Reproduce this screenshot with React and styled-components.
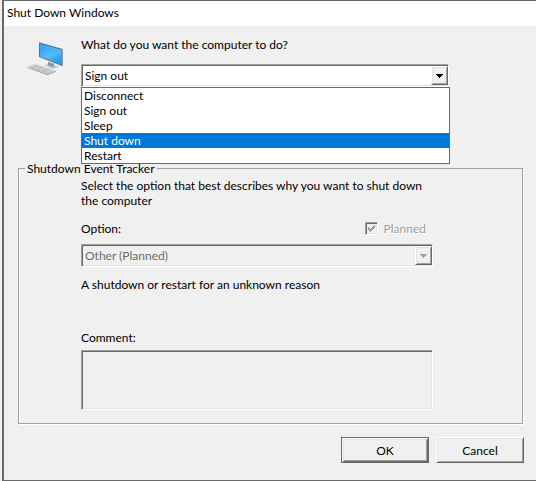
import React from 'react';
import {useState} from 'react';
import styled, {createGlobalStyle, css} from "styled-components"

const GlobalStyle = createGlobalStyle`
	* {
		box-sizing: border-box;
	}

	body {
		margin: 0;
		background-color: #f0f0f0;
		color: #000;
		font-family: Lato, "Open Sans", sans-serif;
		font-size: 12px;
		line-height: 15px;
	}

	button, select, textarea {
		font: inherit;
		color: inherit;
	}
`

const sunken = css`
	border: 1px solid;
	border-color: #a0a0a0 #fff #fff #a0a0a0;
	box-shadow: inset 1px 1px #696969, inset -1px -1px #e3e3e3;
`

const raised = css`
	border: 1px solid;
	border-color: #fff #696969 #696969 #fff;
	box-shadow: inset 1px 1px #e3e3e3, inset -1px -1px #a0a0a0;
`

const Window = styled.div`
	display: flex;
	flex-direction: column;
	min-height: 100vh;
	margin-left: 2px;
	border: solid #696969;
	border-width: 1px 0 1px 2px;
`

const TitleBar = styled.h1`
	margin: 0;
	height: 25px;
	padding: 4px 3px;
	background-color: #fff;
	font-size: 12px;
	font-weight: 400;
`

const Body = styled.form`
	display: flex;
	flex-direction: column;
	padding: 11px 12px 17px 14px;
`

const Question = styled.div`
	display: grid;
	grid-template-columns: 54px 1fr;
	align-items: start;
	padding: 0 75px 0 9px;
`

const Icon = styled.svg`
	width: 36px;
	height: 34px;
	margin-top: 5px;
`

const Label = styled.label`
	display: block;
`

const Combo = styled.div`
	position: relative;
	display: grid;
	margin-top: ${({$gap}) => $gap}px;
`

const Select = styled.select`
	${sunken}
	grid-area: 1 / 1;
	appearance: none;
	width: 100%;
	height: 23px;
	padding: 0 3px;
	border-radius: 0;
	outline: none;
	background-color: #fff;

	&:disabled {
		background-color: #f0f0f0;
		color: #6d6d6d;
		opacity: 1;
	}
`

const Arrow = styled.span`
	${raised}
	grid-area: 1 / 1;
	justify-self: end;
	display: flex;
	align-items: center;
	justify-content: center;
	width: 17px;
	height: 19px;
	margin: 2px 1px 2px 2px;
	background-color: #f0f0f0;
	color: ${({$disabled}) => $disabled ? "#a0a0a0" : "#000"};
	pointer-events: none;
`

const List = styled.ul`
	position: absolute;
	top: 100%;
	left: 0;
	right: -1px;
	z-index: 1;
	margin: 0;
	padding: 0;
	border: 1px solid #696969;
	background-color: #fff;
	list-style: none;
`

const Item = styled.li`
	padding: 0 2px;
	background-color: ${({$active}) => $active ? "#0078d7" : "transparent"};
	color: ${({$active}) => $active ? "#fff" : "#000"};
`

const Group = styled.fieldset`
	min-width: 0;
	margin: 74px 1px 0 0;
	padding: 2px 89px 13px 62px;
	border: 1px solid #a0a0a0;
	box-shadow: 1px 1px #fff, inset 1px 0 #fff;
`

const Legend = styled.legend`
	margin-left: -56px;
	padding: 0 2px;
`

const Text = styled.p`
	margin: 0;
`

const OptionRow = styled.div`
	display: flex;
	justify-content: space-between;
	margin-top: 13px;
	padding-right: 7px;
`

const Planned = styled.label`
	display: flex;
	align-items: center;
	gap: 6px;
	color: #a0a0a0;
	text-shadow: 1px 1px #fff;
`

const Tick = styled.span`
	display: grid;
	place-items: center;
`

const Checkbox = styled.input`
	${sunken}
	grid-area: 1 / 1;
	appearance: none;
	width: 13px;
	height: 13px;
	margin: 0;

	& + svg {
		grid-area: 1 / 1;
		visibility: hidden;
	}

	&:checked + svg {
		visibility: visible;
	}
`

const Reason = styled.p`
	min-height: 53px;
	margin: 10px 0 0;
`

const Comment = styled.textarea`
	${sunken}
	display: block;
	width: 100%;
	height: 60px;
	margin-top: 5px;
	padding: 2px 4px;
	border-radius: 0;
	background-color: #f0f0f0;
	resize: none;
`

const Actions = styled.div`
	display: flex;
	justify-content: flex-end;
	gap: 7px;
	margin-top: 13px;
`

const Button = styled.button`
	${raised}
	width: 88px;
	height: 26px;
	padding: 0;
	background-color: #f0f0f0;

	${({$primary}) => $primary && css`
		border-color: #696969;
		box-shadow: inset 1px 1px #fff, inset -1px -1px #696969, inset 2px 2px #e3e3e3, inset -2px -2px #a0a0a0;
	`}
`

const ACTIONS = ["Disconnect", "Sign out", "Sleep", "Shut down", "Restart"]

const Computer = () => (
	<Icon viewBox="21 21 108 102" aria-hidden="true">
		<defs>
			<linearGradient id="screen" x1="0" y1="0" x2="1" y2="1">
				<stop offset="0" stopColor="#2fa4f5" />
				<stop offset="0.5" stopColor="#4db5fa" />
				<stop offset="1" stopColor="#1c97f0" />
			</linearGradient>
		</defs>
		<path d="M72 90 92 86 118 96 98 102Z" fill="#c3c8cc" />
		<path d="M84 80 102 86 102 96 84 92Z" fill="#8d969d" />
		<path d="M22 96 45 86 108 107 83 119Z" fill="#d3d7da" />
		<path d="M22 96 83 117 108 107 108 110 83 121 22 99Z" fill="#9fa6ab" />
		<path d="M32 95 92 115M40 91 100 111M36 101 55 91M50 106 70 96M65 111 86 101" stroke="#aab1b6" strokeWidth="2" fill="none" />
		<path d="M57 22 128 42 128 94 57 66Z" fill="#5c7484" />
		<path d="M124 41 129 42 129 94 124 92Z" fill="#8e9ba4" />
		<path d="M60 26 124 44 124 89 60 64Z" fill="url(#screen)" />
		<path d="M60 64 124 44 124 60 80 72Z" fill="#6cc4ff" opacity="0.35" />
	</Icon>
)

const Triangle = () => (
	<svg width="7" height="4" viewBox="0 0 7 4" shapeRendering="crispEdges" aria-hidden="true">
		<path d="M0 0h7v1h-1v1h-1v1h-1v1h-1v-1h-1v-1h-1v-1h-1z" fill="currentColor" />
	</svg>
)

const App = () => {
	const [action, setAction] = useState("Sign out")
	const [active, setActive] = useState("Shut down")
	const [open, setOpen] = useState(true)

	const handleToggle = (e) => {
		e.preventDefault();
		setOpen(!open)
	}

	const handlePick = (name) => {
		setAction(name)
		setOpen(false)
	}

	return (
		<>
			<GlobalStyle />
			<Window>
				<TitleBar>Shut Down Windows</TitleBar>
				<Body onSubmit={(e) => e.preventDefault()}>
					<Question>
						<Computer />
						<div>
							<Label htmlFor="action">What do you want the computer to do?</Label>
							<Combo $gap={12}>
								<Select
									id="action"
									value={action}
									onMouseDown={handleToggle}
									onChange={e => setAction(e.target.value)}
								>
									{ACTIONS.map((name) => <option key={name}>{name}</option>)}
								</Select>
								<Arrow><Triangle /></Arrow>
								{open && (
									<List role="listbox" aria-label="Actions">
										{ACTIONS.map((name) => (
											<Item
												key={name}
												role="option"
												aria-selected={name === active}
												$active={name === active}
												onMouseEnter={() => setActive(name)}
												onClick={() => handlePick(name)}
											>
												{name}
											</Item>
										))}
									</List>
								)}
							</Combo>
						</div>
					</Question>
					<Group>
						<Legend>Shutdown Event Tracker</Legend>
						<Text>Select the option that best describes why you want to shut down the computer</Text>
						<OptionRow>
							<Label htmlFor="option">Option:</Label>
							<Planned>
								<Tick>
									<Checkbox type="checkbox" defaultChecked disabled />
									<svg width="7" height="7" viewBox="0 0 7 7" shapeRendering="crispEdges" aria-hidden="true">
										<path d="M0 2h1v1h1v1h1v-1h1v-1h1v-1h1v-1h1v3h-1v1h-1v1h-1v1h-1v1h-1v-1h-1v-1h-1z" fill="#a0a0a0" />
									</svg>
								</Tick>
								Planned
							</Planned>
						</OptionRow>
						<Combo $gap={8}>
							<Select id="option" disabled>
								<option>Other (Planned)</option>
							</Select>
							<Arrow $disabled><Triangle /></Arrow>
						</Combo>
						<Reason>A shutdown or restart for an unknown reason</Reason>
						<Label htmlFor="comment">Comment:</Label>
						<Comment id="comment" />
					</Group>
					<Actions>
						<Button type="submit" $primary>OK</Button>
						<Button type="button">Cancel</Button>
					</Actions>
				</Body>
			</Window>
		</>
	);
};

export default App;
